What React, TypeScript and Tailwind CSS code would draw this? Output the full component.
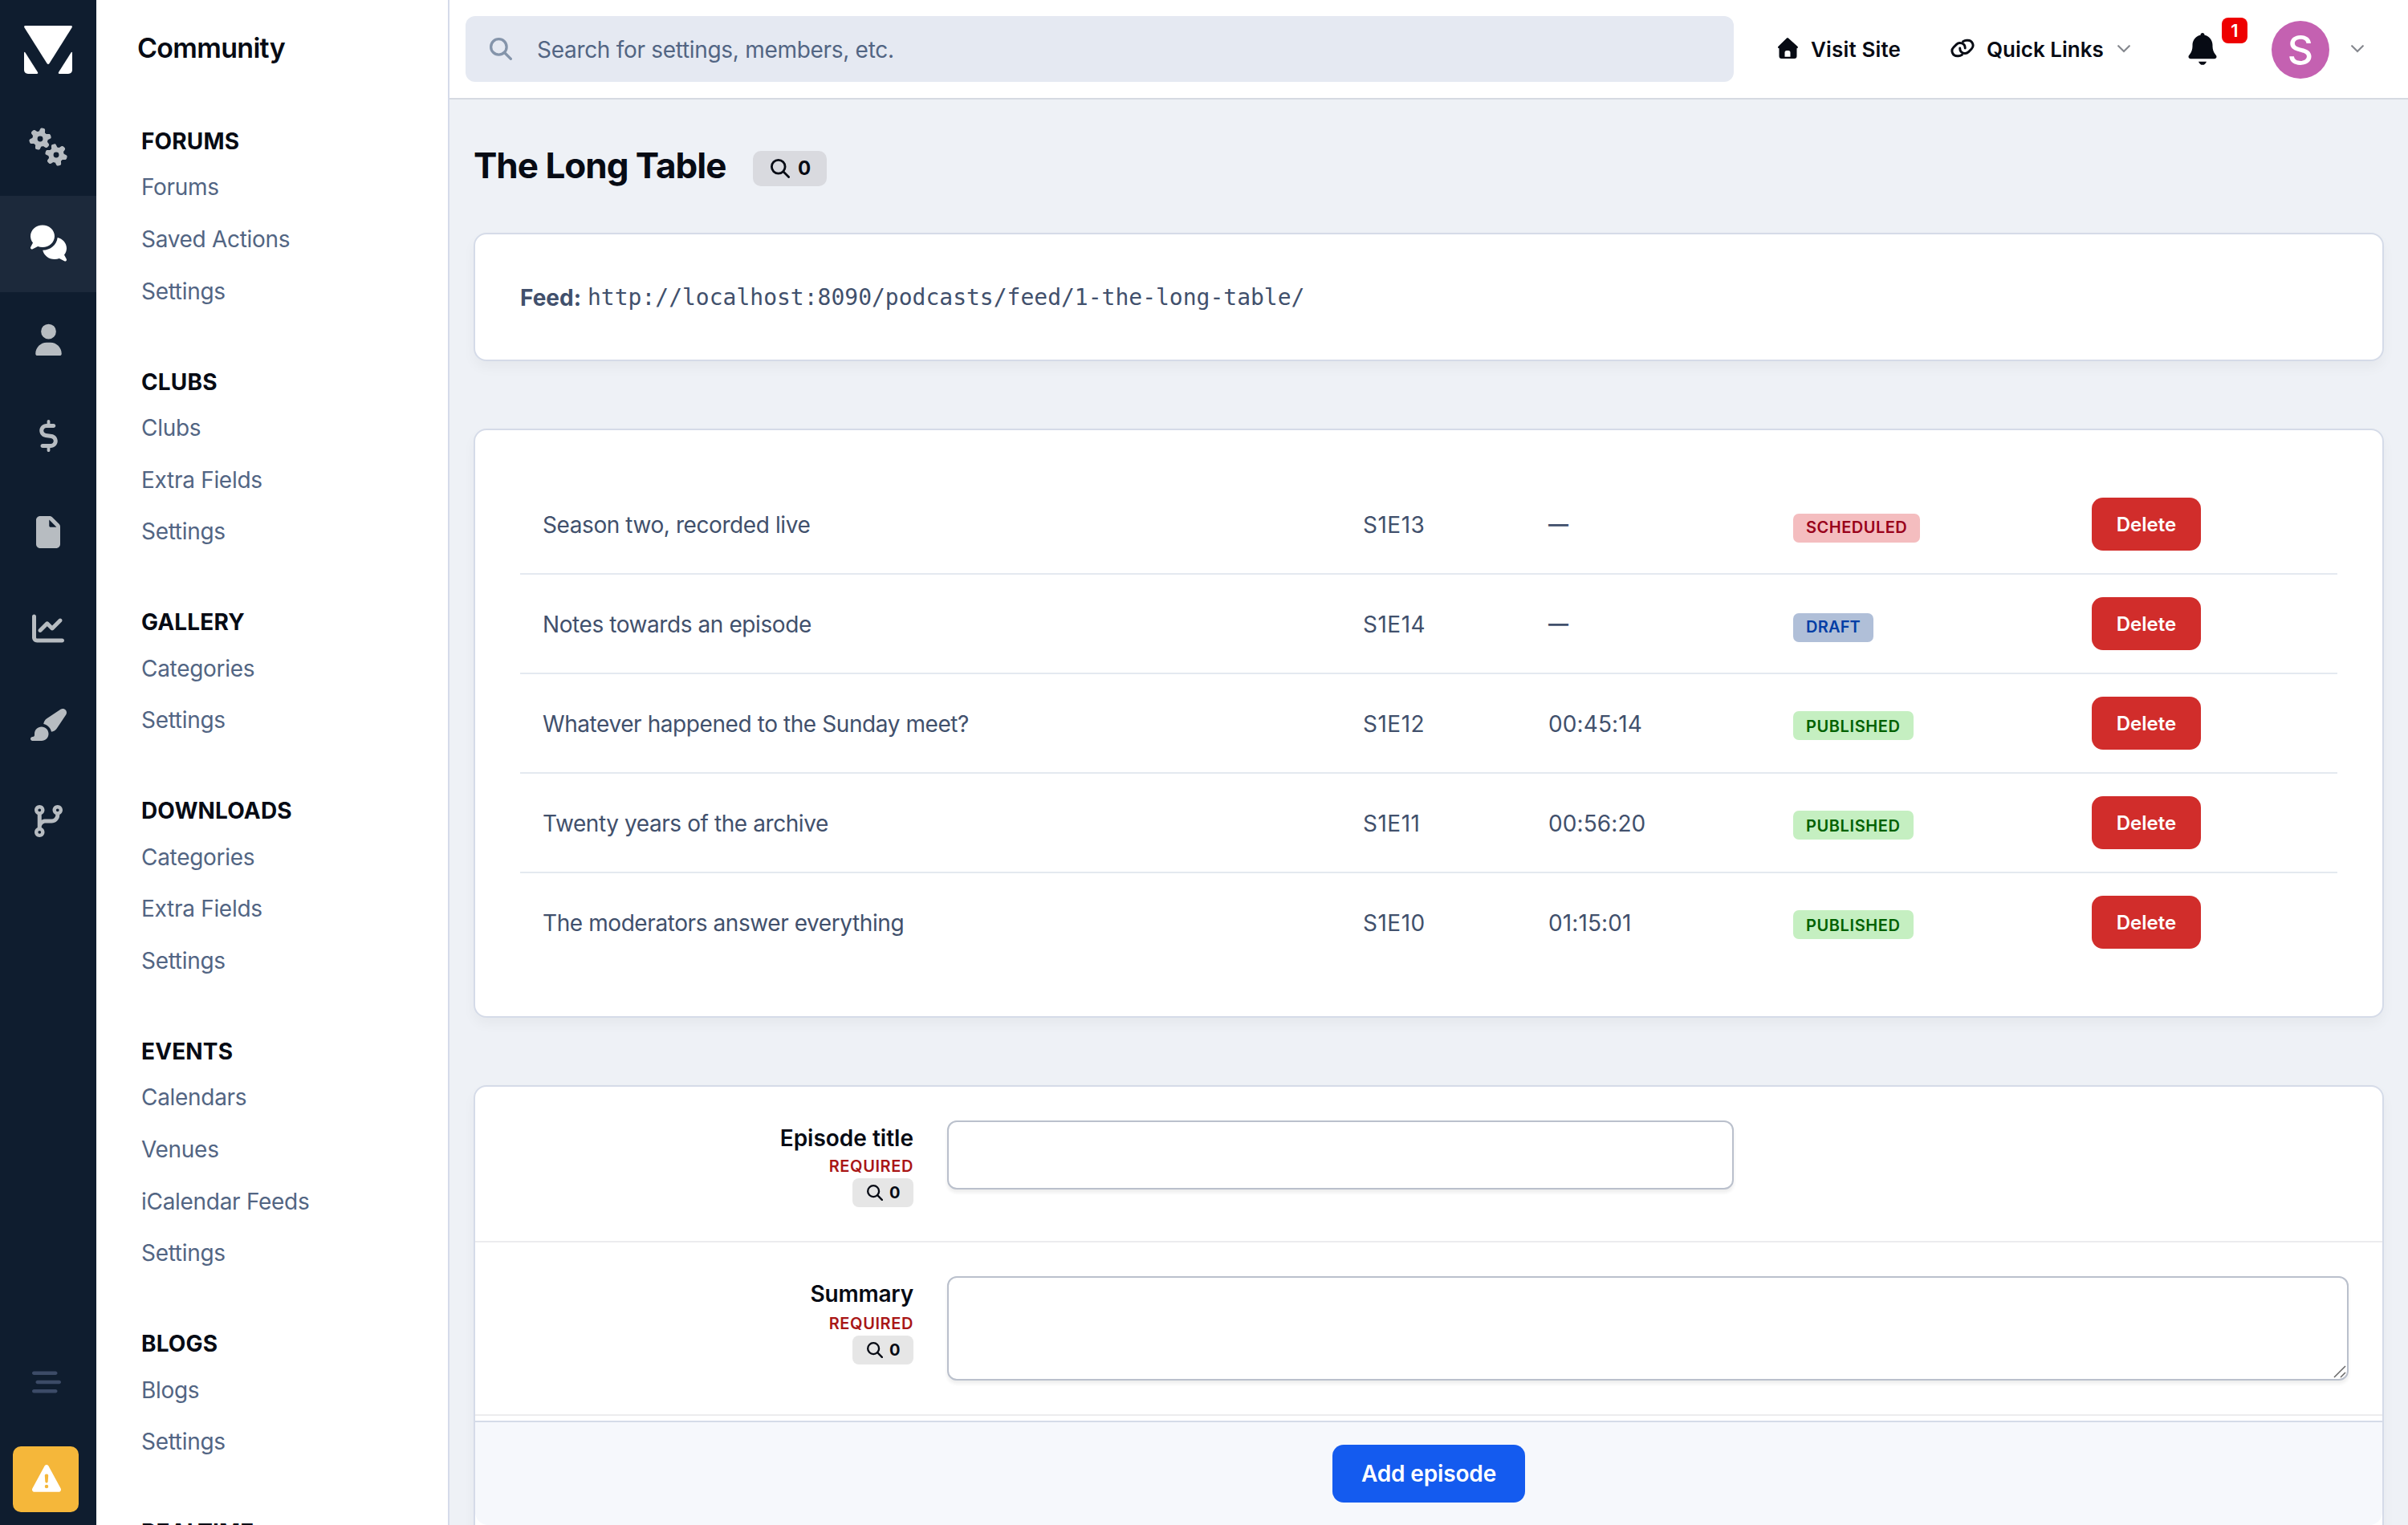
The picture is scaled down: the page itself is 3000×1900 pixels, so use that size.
import React from "react";
import { FaBarsStaggered, FaChartLine, FaCodeBranch } from "react-icons/fa6";

const icons = {
  gears: {
    box: "0 0 640 512",
    d: "M415.9 210.5c12.2-3.3 25 2.5 30.5 13.8L465 261.9c10.3 1.4 20.4 4.2 29.9 8.1l35-23.3c10.5-7 24.4-5.6 33.3 3.3l19.2 19.2c8.9 8.9 10.3 22.9 3.3 33.3l-23.3 34.9c1.9 4.7 3.6 9.6 5 14.7 1.4 5.1 2.3 10.1 3 15.2l37.7 18.6c11.3 5.6 17.1 18.4 13.8 30.5l-7 26.2c-3.3 12.1-14.6 20.3-27.2 19.5l-42-2.7c-6.3 8.1-13.6 15.6-21.9 22l2.7 41.9c.8 12.6-7.4 24-19.5 27.2l-26.2 7c-12.2 3.3-24.9-2.5-30.5-13.8l-18.6-37.6c-10.3-1.4-20.4-4.2-29.9-8.1l-35 23.3c-10.5 7-24.4 5.6-33.3-3.3l-19.2-19.2c-8.9-8.9-10.3-22.8-3.3-33.3l23.3-35c-1.9-4.7-3.6-9.6-5-14.7s-2.3-10.2-3-15.2l-37.7-18.6c-11.3-5.6-17-18.4-13.8-30.5l7-26.2c3.3-12.1 14.6-20.3 27.2-19.5l41.9 2.7c6.3-8.1 13.6-15.6 21.9-22l-2.7-41.8c-.8-12.6 7.4-24 19.5-27.2l26.2-7zM448.4 340a44 44 0 1 0 .1 88 44 44 0 1 0 -.1-88zM224.9-45.5l26.2 7c12.1 3.3 20.3 14.7 19.5 27.2l-2.7 41.8c8.3 6.4 15.6 13.8 21.9 22l42-2.7c12.5-.8 23.9 7.4 27.2 19.5l7 26.2c3.2 12.1-2.5 24.9-13.8 30.5l-37.7 18.6c-.7 5.1-1.7 10.2-3 15.2s-3.1 10-5 14.7l23.3 35c7 10.5 5.6 24.4-3.3 33.3L307.3 262c-8.9 8.9-22.8 10.3-33.3 3.3L239 242c-9.5 3.9-19.6 6.7-29.9 8.1l-18.6 37.6c-5.6 11.3-18.4 17-30.5 13.8l-26.2-7c-12.2-3.3-20.3-14.7-19.5-27.2l2.7-41.9c-8.3-6.4-15.6-13.8-21.9-22l-42 2.7c-12.5 .8-23.9-7.4-27.2-19.5l-7-26.2c-3.2-12.1 2.5-24.9 13.8-30.5l37.7-18.6c.7-5.1 1.7-10.1 3-15.2 1.4-5.1 3-10 5-14.7L55.1 46.5c-7-10.5-5.6-24.4 3.3-33.3L77.6-6c8.9-8.9 22.8-10.3 33.3-3.3l35 23.3c9.5-3.9 19.6-6.7 29.9-8.1l18.6-37.6c5.6-11.3 18.3-17 30.5-13.8zM192.4 84a44 44 0 1 0 0 88 44 44 0 1 0 0-88z",
  },
  comments: {
    box: "0 0 576 512",
    d: "M384 144c0 97.2-86 176-192 176-26.7 0-52.1-5-75.2-14L35.2 349.2c-9.3 4.9-20.7 3.2-28.2-4.2s-9.2-18.9-4.2-28.2l35.6-67.2C14.3 220.2 0 183.6 0 144 0 46.8 86-32 192-32S384 46.8 384 144zm0 368c-94.1 0-172.4-62.1-188.8-144 120-1.5 224.3-86.9 235.8-202.7 83.3 19.2 145 88.3 145 170.7 0 39.6-14.3 76.2-38.4 105.6l35.6 67.2c4.9 9.3 3.2 20.7-4.2 28.2s-18.9 9.2-28.2 4.2L459.2 498c-23.1 9-48.5 14-75.2 14z",
  },
  user: {
    box: "0 0 448 512",
    d: "M224 248a120 120 0 1 0 0-240 120 120 0 1 0 0 240zm-29.7 56C95.8 304 16 383.8 16 482.3 16 498.7 29.3 512 45.7 512l356.6 0c16.4 0 29.7-13.3 29.7-29.7 0-98.5-79.8-178.3-178.3-178.3l-59.4 0z",
  },
  dollar: {
    box: "0 0 320 512",
    d: "M136 24c0-13.3 10.7-24 24-24s24 10.7 24 24l0 40 56 0c17.7 0 32 14.3 32 32s-14.3 32-32 32l-114.9 0c-24.9 0-45.1 20.2-45.1 45.1 0 22.5 16.5 41.5 38.7 44.7l91.6 13.1c53.8 7.7 93.7 53.7 93.7 108 0 60.3-48.9 109.1-109.1 109.1l-10.9 0 0 40c0 13.3-10.7 24-24 24s-24-10.7-24-24l0-40-72 0c-17.7 0-32-14.3-32-32s14.3-32 32-32l130.9 0c24.9 0 45.1-20.2 45.1-45.1 0-22.5-16.5-41.5-38.7-44.7l-91.6-13.1C55.9 273.5 16 227.4 16 173.1 16 112.9 64.9 64 125.1 64l10.9 0 0-40z",
  },
  file: {
    box: "0 0 384 512",
    d: "M0 64C0 28.7 28.7 0 64 0L213.5 0c17 0 33.3 6.7 45.3 18.7L365.3 125.3c12 12 18.7 28.3 18.7 45.3L384 448c0 35.3-28.7 64-64 64L64 512c-35.3 0-64-28.7-64-64L0 64zm208-5.5l0 93.5c0 13.3 10.7 24 24 24L325.5 176 208 58.5z",
  },
  brush: {
    box: "0 0 576 512",
    d: "M480.5 10.3L259.1 158c-29.1 19.4-47.6 50.9-50.6 85.3 62.3 12.8 111.4 61.9 124.3 124.3 34.5-3 65.9-21.5 85.3-50.6L565.7 95.5c6.7-10.1 10.3-21.9 10.3-34.1 0-33.9-27.5-61.4-61.4-61.4-12.1 0-24 3.6-34.1 10.3zM288 400c0-61.9-50.1-112-112-112S64 338.1 64 400c0 3.9 .2 7.8 .6 11.6 1.8 17.5-10.2 36.4-27.8 36.4L32 448c-17.7 0-32 14.3-32 32s14.3 32 32 32l144 0c61.9 0 112-50.1 112-112z",
  },
  warning: {
    box: "0 0 512 512",
    d: "M256 0c14.7 0 28.2 8.1 35.2 21l216 400c6.7 12.4 6.4 27.4-.8 39.5S486.1 480 472 480L40 480c-14.1 0-27.2-7.4-34.4-19.5s-7.5-27.1-.8-39.5l216-400c7-12.9 20.5-21 35.2-21zm0 352a32 32 0 1 0 0 64 32 32 0 1 0 0-64zm0-192c-18.2 0-32.7 15.5-31.4 33.7l7.4 104c.9 12.5 11.4 22.3 23.9 22.3 12.6 0 23-9.7 23.9-22.3l7.4-104c1.3-18.2-13.1-33.7-31.4-33.7z",
  },
  home: {
    box: "0 0 26 26",
    d: "M12 .4q1-.8 2 0l11.600 10.600q.8 1 0 1.800-.5.400-1.100.4V23q0 3-3 3h-16q-3 0-3-3v-9.800q-.8 0-1.200-.4-.8-.8 0-1.800zM9.500 18.500v5.200h7v-5.200q0-2.500-2.500-2.500h-2q-2.500 0-2.500 2.500z",
  },
  bell: {
    box: "0 0 448 512",
    d: "M224 0c-17.7 0-32 14.3-32 32l0 3.2C119 50 64 114.6 64 192l0 21.7c0 48.1-16.4 94.8-46.4 132.4L7.8 358.3C2.7 364.6 0 372.4 0 380.5 0 400.1 15.9 412 35.5 412l376.9 0c19.6 0 35.5-11.900 35.5-31.500 0-8.1-2.7-15.9-7.8-22.2l-9.8-12.2C400.4 308.5 384 261.8 384 213.7l0-21.7c0-77.4-55-142-128-156.8l0-3.2c0-17.7-14.3-32-32-32zM160 457q20 53 64 53t64-53z",
  },
};

const Icon = ({ name, className }: { name: keyof typeof icons; className?: string }) => (
  <svg viewBox={icons[name].box} fill="currentColor" fillRule="evenodd" className={`overflow-visible ${className}`}>
    <path d={icons[name].d} />
  </svg>
);

const SearchIcon = ({ className }: { className?: string }) => (
  <svg viewBox="0 0 512 512" fill="none" stroke="currentColor" strokeWidth="60" strokeLinecap="round" className={className}>
    <circle cx="208" cy="208" r="178" />
    <path d="M338 338l144 144" />
  </svg>
);

const LinkIcon = ({ className }: { className?: string }) => (
  <svg viewBox="0 0 576 512" fill="none" stroke="currentColor" strokeWidth="58" strokeLinecap="round" className={className}>
    <path d="M300 92q44-28 86-28h34a124.500 124.500 0 0 1 88 212.500l-71 71a124.500 124.500 0 0 1-212.500-88v-5" />
    <path d="M276 420q-44 28-86 28h-34a124.500 124.500 0 0 1-88-212.500l71-71a124.500 124.500 0 0 1 212.500 88v5" />
  </svg>
);

const Chevron = () => (
  <svg viewBox="0 0 16 10" fill="none" stroke="#85888e" strokeWidth="2.200" strokeLinecap="round" className="h-[10px] w-4">
    <path d="M1.200 1.200l6.800 6.800 6.800-6.800" />
  </svg>
);

const menu = [
  { title: "FORUMS", links: ["Forums", "Saved Actions", "Settings"] },
  { title: "CLUBS", links: ["Clubs", "Extra Fields", "Settings"] },
  { title: "GALLERY", links: ["Categories", "Settings"] },
  { title: "DOWNLOADS", links: ["Categories", "Extra Fields", "Settings"] },
  { title: "EVENTS", links: ["Calendars", "Venues", "iCalendar Feeds", "Settings"] },
  { title: "BLOGS", links: ["Blogs", "Settings"] },
  { title: "REALTIME", links: [] },
];

const episodes = [
  { title: "Season two, recorded live", code: "S1E13", time: "—", status: "SCHEDULED" },
  { title: "Notes towards an episode", code: "S1E14", time: "—", status: "DRAFT" },
  { title: "Whatever happened to the Sunday meet?", code: "S1E12", time: "00:45:14", status: "PUBLISHED" },
  { title: "Twenty years of the archive", code: "S1E11", time: "00:56:20", status: "PUBLISHED" },
  { title: "The moderators answer everything", code: "S1E10", time: "01:15:01", status: "PUBLISHED" },
];

const statusColors: Record<string, string> = {
  SCHEDULED: "mt-12 pb-0.5 tracking-[0.500px] bg-[#f4bdbf] text-[#99001a]",
  DRAFT: "mt-12 pb-0.5 tracking-[0.200px] bg-[#b0bfd8] text-[#003da5]",
  PUBLISHED: "mt-[46px] pt-0.5 tracking-[0.600px] bg-[#c5efc1] text-[#006100]",
};

const Rail = () => {
  const item = "flex h-[120px] w-full items-center justify-center pb-[3px]";
  return (
    <div className="flex h-full w-[120px] shrink-0 flex-col items-center bg-[#0f1d2f] text-[#b7bcc1]">
      <div className="flex h-[124px] items-center">
        <svg viewBox="0 0 60 60" fill="#fff" className="h-[60px] w-[60px]">
          <path d="M1 0h58q1.500 .8 .5 2.500L31.500 47q-1.500 2-3 0L.5 2.500Q-.5 .8 1 0z" />
          <path d="M0 33.500q.3-1.500 1.300-.2L17 58q1 1.700-.8 2H5q-5-.3-5-5z" />
          <path d="M60 33.500q-.3-1.500-1.300-.2L43 58q-1 1.700 .8 2H55q5-.3 5-5z" />
        </svg>
      </div>
      <div className={item}><Icon name="gears" className="h-10 w-[50px]" /></div>
      <div className={`${item} bg-[#1c293b] text-white`}><Icon name="comments" className="h-10 w-[45px]" /></div>
      <div className={item}><Icon name="user" className="h-10 w-[35px]" /></div>
      <div className={item}><Icon name="dollar" className="h-10 w-[25px]" /></div>
      <div className={item}><Icon name="file" className="h-10 w-[30px]" /></div>
      <div className={item}><FaChartLine className="h-10 w-10" /></div>
      <div className={item}><Icon name="brush" className="h-10 w-[45px]" /></div>
      <div className={item}><FaCodeBranch className="h-10 w-[35px]" /></div>
      <div className="mt-auto mb-4 flex w-full flex-col items-start gap-[62px] pl-4">
        <FaBarsStaggered className="ml-6 h-9 w-9 text-[#3c4b67]" />
        <div className="flex h-[82px] w-[82px] items-center justify-center rounded-[10px] bg-[#f5b73a] text-white">
          <Icon name="warning" className="ml-0.5 h-9 w-9" />
        </div>
      </div>
    </div>
  );
};

const Sidebar = () => (
  <div className="h-full w-[440px] shrink-0 overflow-hidden border-r-2 border-[#d5dbea] bg-white">
    <h2 className="mt-[40px] mb-[76px] pl-[51px] text-[34px] leading-[40px] font-semibold tracking-[-0.700px] text-[#070b14]">
      Community
    </h2>
    {menu.map((section) => (
      <div key={section.title} className="pb-[50.200px] pl-14">
        <h3 className="h-[55.400px] text-[28px] leading-[40px] font-bold tracking-[0.150px] text-[#070b14]">{section.title}</h3>
        {section.links.map((link) => (
          <p key={link} className="h-[64.700px] text-[28px] leading-[45px] tracking-[-0.300px] text-[#526583]">
            {link}
          </p>
        ))}
      </div>
    ))}
  </div>
);

const TopBar = () => (
  <div className="flex h-[124px] w-full shrink-0 items-center border-b-2 border-[#d6dae1] bg-white pl-5 text-[#070b14]">
    <div className="flex h-[82px] w-[1580px] items-center rounded-xl bg-[#e5e9f2] pl-[30px]">
      <SearchIcon className="h-7 w-7 text-[#8494aa]" />
      <span className="ml-[31px] pt-[2px] text-[28px] tracking-[-0.300px] text-[#526583]">
        Search for settings, members, etc.
      </span>
    </div>
    <Icon name="home" className="mb-0.5 ml-[54px] h-[26px] w-[26px]" />
    <span className="ml-4 w-[112px] text-[26px] font-semibold tracking-[0.150px] whitespace-nowrap">Visit Site</span>
    <LinkIcon className="mb-0.5 ml-[62px] h-[26px] w-[30px]" />
    <span className="mr-[18px] ml-[15px] w-[145px] text-[26px] font-semibold whitespace-nowrap">Quick Links</span>
    <Chevron />
    <div className="relative ml-[72px]">
      <Icon name="bell" className="h-10 w-9" />
      <span className="absolute -top-[19px] left-[42px] flex h-8 w-8 items-center justify-center rounded-lg bg-[#ee0000] text-[22px] font-semibold text-white">
        1
      </span>
    </div>
    <div className="mt-0.5 mr-[27px] ml-[68px] flex h-[72px] w-[72px] items-center justify-center rounded-full bg-[#c461b1] text-[50px] font-medium text-white">
      S
    </div>
    <Chevron />
  </div>
);

type FieldProps = { label: string; labelClass?: string; children: React.ReactNode };

const Field = ({ label, labelClass = "", children }: FieldProps) => (
  <div className="flex border-b-2 border-[#ececee] pt-[42px]">
    <div className="flex w-[546px] shrink-0 flex-col items-end pt-[2px] text-[#070b14]">
      <p className={`text-[28px] leading-[40px] font-semibold ${labelClass}`}>{label}</p>
      <p className="text-[20px] leading-[30px] font-semibold tracking-[0.600px] text-[#a91616]">REQUIRED</p>
      <div className="flex h-9 w-[76px] items-center gap-2 rounded-lg bg-[#e6e6e6] pl-[18px]">
        <SearchIcon className="h-5 w-5" />
        <span className="text-[20px] font-bold">0</span>
      </div>
    </div>
    <div className="ml-[42px] flex-1">{children}</div>
  </div>
);

const card = "rounded-2xl border-2 border-[#d5dbe8] bg-white shadow-[0_8px_16px_rgba(0,0,0,0.04)]";
const input =
  "block resize-none rounded-xl border-2 border-[#bac0cc] bg-white shadow-[0_4px_4px_rgba(0,0,0,0.07)] outline-none";

export default function App() {
  return (
    <div className="flex h-[1900px] w-[3000px] overflow-hidden bg-[#eef1f6] font-['Inter',sans-serif]">
      <Rail />
      <Sidebar />
      <div className="flex h-full flex-1 flex-col">
        <TopBar />
        <div className="flex flex-col px-[30px]">
          <div className="flex h-[166px] items-start pt-[54px]">
            <h1 className="w-[348px] text-[44px] leading-[56px] font-bold tracking-[-1px] whitespace-nowrap text-[#070b14]">
              The Long Table
            </h1>
            <div className="mt-[10px] flex h-11 w-[92px] items-center gap-[10px] rounded-[10px] bg-[#d9dadf] pl-[22px] text-[#070b14]">
              <SearchIcon className="h-6 w-6" />
              <span className="text-[24px] font-bold">0</span>
            </div>
          </div>

          <div className={`${card} mb-[84px] flex h-[160px] items-center pt-[2px] pl-14 text-[28px] text-[#41506c]`}>
            <strong className="font-bold">Feed:</strong>
            <span className="ml-2 font-['DejaVu_Sans_Mono',monospace]">
              http://localhost:8090/podcasts/feed/1-the-long-table/
            </span>
          </div>

          <div className={`${card} mb-[84px] h-[734px] px-14 pt-14`}>
            {episodes.map((ep) => (
              <div
                key={ep.code}
                className="flex h-[124px] items-center border-b-2 border-[#e4e9f0] pl-7 text-[28px] text-[#41506c] last:border-transparent"
              >
                <span className="w-[1022px] pt-[2px] tracking-[-0.420px]">{ep.title}</span>
                <span className="w-[231px] pt-[2px] tracking-[0.500px]">{ep.code}</span>
                <span className={`w-[305px] pt-[2px] ${ep.time === "—" ? "text-[25px] font-semibold" : "tracking-[0.100px]"}`}>
                  {ep.time}
                </span>
                <div className="flex h-full w-[372px] items-start">
                  <span
                    className={`flex h-9 items-center rounded-[7px] px-4 text-[20px] font-semibold ${statusColors[ep.status]}`}
                  >
                    {ep.status}
                  </span>
                </div>
                <button className="h-[66px] w-[136px] rounded-[14px] bg-[#d12d2b] pt-px text-[24px] font-semibold text-white">
                  Delete
                </button>
              </div>
            ))}
          </div>

          <div className={`${card} h-[600px] shrink-0`}>
            <Field label="Episode title">
              <input className={`${input} mb-16 h-[86px] w-[980px]`} />
            </Field>
            <Field label="Summary" labelClass="pb-0.5 tracking-[-0.200px]">
              <div className="relative mb-[42px] w-[1746px]">
                <textarea className={`${input} h-[130px] w-full`} />
                <svg viewBox="0 0 16 16" stroke="#666" strokeWidth="1.500" className="absolute right-[3px] bottom-[3px] h-4 w-4">
                  <path d="M1 15L15 1M9 15l6-6" />
                </svg>
              </div>
            </Field>
            <div className="mt-[6px] flex h-[130px] items-center justify-center rounded-b-2xl border-t-2 border-[#d5dbe8] bg-[#f6f8fc]">
              <button className="h-[72px] w-[240px] rounded-[14px] bg-[#145bef] text-[28px] font-semibold tracking-[-0.150px] text-white">
                Add episode
              </button>
            </div>
          </div>
        </div>
      </div>
    </div>
  );
}
